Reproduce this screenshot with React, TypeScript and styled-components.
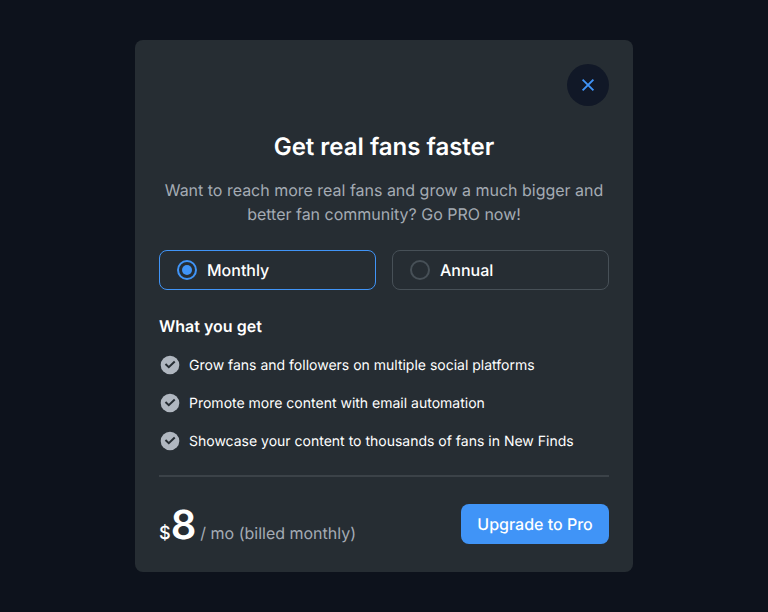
import React, { useState } from "react";
import styled, { createGlobalStyle } from "styled-components";

const GlobalStyle = createGlobalStyle`
  * { box-sizing: border-box; }
  body {
    margin: 0;
    background: #0d121c;
    font-family: Inter, sans-serif;
    text-rendering: geometricPrecision;
  }
`;

const Page = styled.main`
  height: 612px;
  display: flex;
  align-items: center;
  justify-content: center;
  background: #0d121c;
`;

const Dialog = styled.section`
  width: 498px;
  height: 532px;
  padding: 24px;
  display: flex;
  flex-direction: column;
  border-radius: 8px;
  background: #262d33;
  color: #fff;
`;

const CloseButton = styled.button`
  align-self: flex-end;
  flex: none;
  width: 42px;
  height: 42px;
  padding: 0;
  display: grid;
  place-items: center;
  border: 0;
  border-radius: 50%;
  background: #111827;
  color: #4094f7;
`;

const Title = styled.h1`
  margin: 25px 0 0;
  font-size: 24px;
  line-height: 32px;
  font-weight: 600;
  text-align: center;
`;

const Lead = styled.p`
  margin: 15px 0 0;
  font-size: 16px;
  line-height: 24px;
  letter-spacing: -0.01px;
  text-align: center;
  color: #a4abb3;
`;

const Plans = styled.div`
  margin-top: 24px;
  display: grid;
  grid-template-columns: 1fr 1fr;
  gap: 16px;
`;

const Plan = styled.button<{ $active: boolean }>`
  height: 40px;
  padding: 0 16px;
  display: flex;
  align-items: center;
  gap: 10px;
  border: 1px solid ${(p) => (p.$active ? "#4094f7" : "#475057")};
  border-radius: 8px;
  background: transparent;
  color: #fff;
  font: 500 16px/24px Inter, sans-serif;
  text-rendering: inherit;
`;

const Radio = styled.span<{ $active: boolean }>`
  width: 20px;
  height: 20px;
  margin-left: 1px;
  display: grid;
  place-items: center;
  border: 2px solid ${(p) => (p.$active ? "#4094f7" : "#475057")};
  border-radius: 50%;
  &::after {
    content: "";
    width: 10px;
    height: 10px;
    border-radius: 50%;
    background: ${(p) => (p.$active ? "#4094f7" : "transparent")};
  }
`;

const Subtitle = styled.h2`
  margin: 24px 0 0;
  font-size: 16px;
  line-height: 24px;
  font-weight: 600;
`;

const Features = styled.ul`
  margin: 16px 0 0;
  padding: 0;
  display: grid;
  gap: 16px;
  list-style: none;
`;

const Feature = styled.li`
  height: 22px;
  display: flex;
  align-items: center;
  gap: 8px;
  font-size: 14px;
  line-height: 22px;
`;

const FeatureText = styled.span`
  padding-top: 2px;
`;

const Footer = styled.footer`
  margin-top: 23px;
  padding-top: 27px;
  display: flex;
  justify-content: space-between;
  border-top: 2px solid #3b4248;
`;

const Price = styled.p`
  margin: 1px 0 0;
  display: flex;
  align-items: baseline;
  line-height: 40px;
`;

const Currency = styled.span`
  font-size: 18px;
  font-weight: 500;
`;

const Amount = styled.strong`
  font-size: 40px;
  font-weight: 600;
`;

const Period = styled.span`
  margin-left: 4px;
  font-size: 16px;
  color: #a4abb3;
`;

const Upgrade = styled.button`
  width: 148px;
  height: 40px;
  padding: 0;
  border: 0;
  border-radius: 8px;
  background: #4094f7;
  color: #fff;
  font: 500 16px/24px Inter, sans-serif;
  text-rendering: inherit;
`;

const features = [
  "Grow fans and followers on multiple social platforms",
  "Promote more content with email automation",
  "Showcase your content to thousands of fans in New Finds",
];

const CheckIcon = () => (
  <svg width="22" height="22" viewBox="0 0 22 22" aria-hidden="true">
    <circle cx="11" cy="11" r="9.3" fill="#b0b7c0" />
    <path d="M7.2 10.7l2.6 2.5 5.2-5" fill="none" stroke="#262d33" strokeWidth="2" strokeLinecap="square" strokeLinejoin="miter" />
  </svg>
);

export default function App() {
  const [plan, setPlan] = useState("Monthly");
  return (
    <Page>
      <GlobalStyle />
      <Dialog>
        <CloseButton aria-label="Close">
          <svg width="14" height="14" viewBox="0 0 14 14">
            <path d="M2.3 2.3l9.4 9.4M11.7 2.3L2.3 11.7" stroke="currentColor" strokeWidth="1.9" strokeLinecap="square" />
          </svg>
        </CloseButton>
        <Title>Get real fans faster</Title>
        <Lead>Want to reach more real fans and grow a much bigger and better fan community? Go PRO now!</Lead>
        <Plans>
          {["Monthly", "Annual"].map((name) => (
            <Plan key={name} $active={plan === name} onClick={() => setPlan(name)}>
              <Radio $active={plan === name} />
              {name}
            </Plan>
          ))}
        </Plans>
        <Subtitle>What you get</Subtitle>
        <Features>
          {features.map((text) => (
            <Feature key={text}>
              <CheckIcon />
              <FeatureText>{text}</FeatureText>
            </Feature>
          ))}
        </Features>
        <Footer>
          <Price>
            <Currency>$</Currency>
            <Amount>8</Amount>
            <Period>/ mo (billed monthly)</Period>
          </Price>
          <Upgrade>Upgrade to Pro</Upgrade>
        </Footer>
      </Dialog>
    </Page>
  );
}
